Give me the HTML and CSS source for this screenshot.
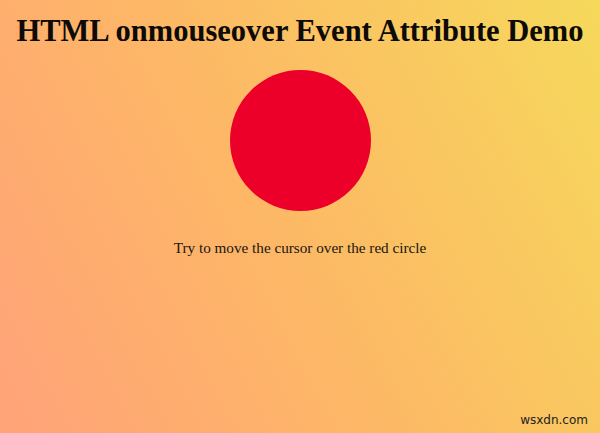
FILE: index.html
```html
<!DOCTYPE html>
<html>
<head>
<meta charset="utf-8">
<link rel="stylesheet" href="styles.css">
</head>
<body>
<div class="page">
  <h1 class="title">HTML onmouseover Event Attribute Demo</h1>
  <div class="circle"></div>
  <p class="hint">Try to move the cursor over the red circle</p>
</div>
<div class="mark">wsxdn.com</div>
</body>
</html>
```
FILE: styles.css
```css
html, body {
  margin: 0;
  height: 100%;
}
body {
  background: linear-gradient(62deg, #ffa279 0%, #fdb766 45%, #f6d95b 100%);
  font-family: "Liberation Serif", "Times New Roman", serif;
  color: #111;
  overflow: hidden;
  position: relative;
}
.page {
  display: flex;
  flex-direction: column;
  align-items: center;
  padding-top: 14px;
}
.title {
  margin: 0;
  font-size: 30.5px;
  font-weight: bold;
  line-height: 34px;
  color: #0d0a08;
}
.circle {
  width: 141px;
  height: 141px;
  border-radius: 50%;
  background: #ec0029;
  margin-top: 22px;
}
.hint {
  margin: 28px 0 0;
  font-size: 15.2px;
  line-height: 18px;
  color: #1a1510;
}
.mark {
  position: absolute;
  right: 12px;
  bottom: 6px;
  font-family: "DejaVu Sans", sans-serif;
  font-size: 12px;
  color: #222;
}
```
